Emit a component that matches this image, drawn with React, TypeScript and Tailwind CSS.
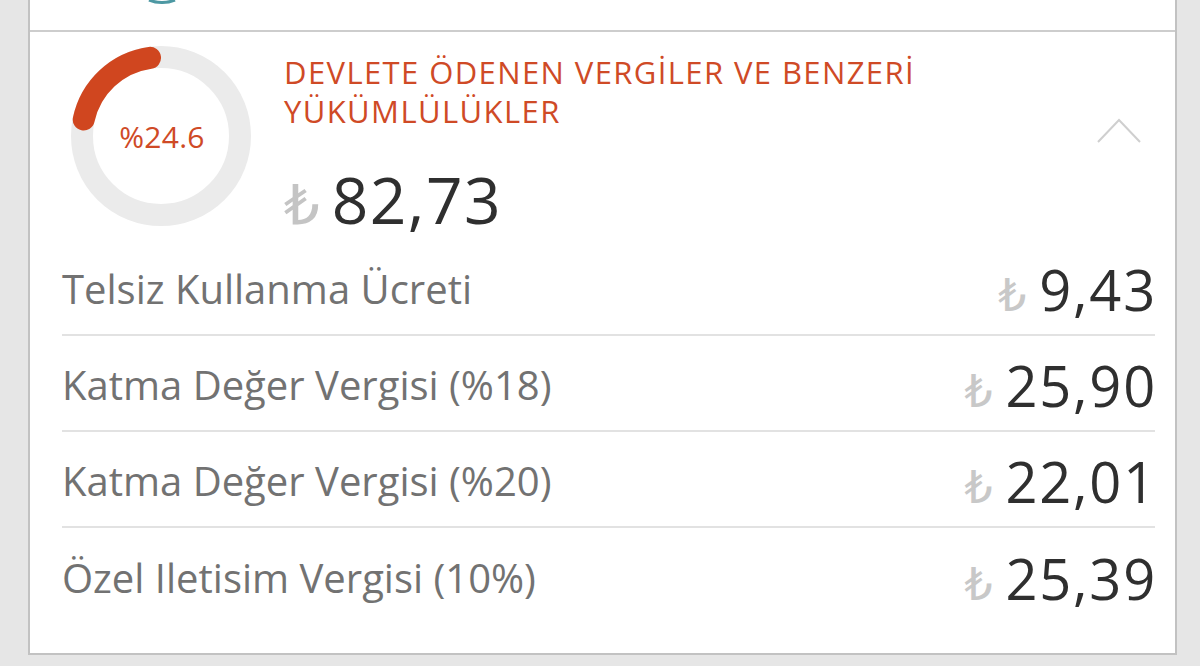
import React from "react";

const rows = [
  { label: "Telsiz Kullanma Ücreti", amount: "9,43" },
  { label: "Katma Değer Vergisi (%18)", amount: "25,90" },
  { label: "Katma Değer Vergisi (%20)", amount: "22,01" },
  { label: "Özel Iletisim Vergisi (10%)", amount: "25,39" },
];

const lira = { fontFamily: '"DejaVu Sans", "Noto Sans", sans-serif' };

function Donut() {
  const cx = 90;
  const cy = 90;
  const r = 79;
  const toXY = (deg: number) => {
    const a = ((deg - 90) * Math.PI) / 180;
    return [cx + r * Math.cos(a), cy + r * Math.sin(a)];
  };
  const [sx, sy] = toXY(-78);
  const [ex, ey] = toXY(-8);
  return (
    <div className="relative w-[180px] h-[180px] shrink-0">
      <svg width="180" height="180" viewBox="0 0 180 180">
        <circle cx={cx} cy={cy} r={r} fill="none" stroke="#ebebeb" strokeWidth="22" />
        <path
          d={`M ${sx} ${sy} A ${r} ${r} 0 0 1 ${ex} ${ey}`}
          fill="none"
          stroke="#d0461f"
          strokeWidth="22"
          strokeLinecap="round"
        />
      </svg>
      <div className="absolute inset-0 flex items-center justify-center text-[30px] text-[#cf4a26] tracking-[0.3px] pl-[2px]">
        %24.6
      </div>
    </div>
  );
}

export default function App() {
  return (
    <div
      className="w-[1200px] h-[666px] bg-[#e6e6e6] overflow-hidden"
      style={{ fontFamily: '"Open Sans", "Noto Sans", sans-serif' }}
    >
      <div className="ml-[28px] w-[1149px] h-[655px] bg-white border-x-2 border-b-2 border-[#c2c2c2]">
        <div className="h-[32px] border-b-2 border-[#cdcdcd] relative">
          <svg className="absolute left-[118px] top-0" width="28" height="4" viewBox="0 0 28 4">
            <path d="M 1 0 Q 14 5 27 0" fill="none" stroke="#4d98a3" strokeWidth="3" />
          </svg>
        </div>
        <div className="flex pl-[41px] pr-[34px] pt-[14px] h-[208px]">
          <Donut />
          <div className="ml-[33px] flex-1 flex flex-col">
            <div className="flex justify-between">
              <div className="text-[31px] leading-[39px] text-[#cf4a26] pt-[7px] tracking-[1.4px]">
                DEVLETE ÖDENEN VERGİLER VE BENZERİ
                <br />
                YÜKÜMLÜLÜKLER
              </div>
              <svg className="mt-[72px]" width="44" height="26" viewBox="0 0 44 26">
                <path d="M 1 24 L 22 2 L 43 24" fill="none" stroke="#cfcfcf" strokeWidth="2" />
              </svg>
            </div>
            <div className="flex items-baseline mt-[24px]">
              <span style={lira} className="text-[56px] leading-none text-[#c4c4c4]">₺</span>
              <span className="ml-[12px] text-[64px] leading-none text-[#2f2f2f] tracking-[1.5px]">82,73</span>
            </div>
          </div>
        </div>
        <div className="pl-[32px] pr-[20px]">
          {rows.map((row, i) => (
            <div
              key={row.label}
              className={`h-[96px] flex items-center justify-between ${i < rows.length - 1 ? "border-b-2 border-[#e2e2e2]" : ""}`}
            >
              <span className="text-[40px] text-[#727272] tracking-[0px] pt-[4px]">{row.label}</span>
              <span className="flex items-baseline pt-[4px]">
                <span style={lira} className="text-[44px] leading-none text-[#c8c8c8]">₺</span>
                <span className="ml-[13px] text-[56px] leading-none text-[#2f2f2f] tracking-[1.8px] -mr-[2px]">{row.amount}</span>
              </span>
            </div>
          ))}
        </div>
      </div>
    </div>
  );
}
